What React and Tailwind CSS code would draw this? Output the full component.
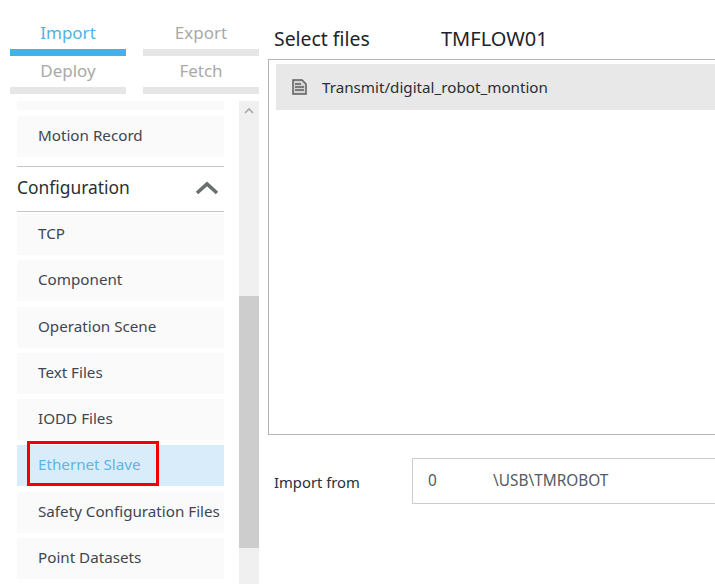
function Tab({ label, active }) {
  return (
    <div className="flex flex-col items-center">
      <div className={`h-[31px] text-[17px] leading-[29px] ${active ? "text-[#4fb3e8]" : "text-[#a9a9a9]"}`}>{label}</div>
      <div className={`h-[7px] w-full ${active ? "bg-[#47b0e5]" : "bg-[#e6e6e6]"}`} />
    </div>
  );
}

function Item({ label, active, children }) {
  return (
    <div className={`relative h-[41px] shrink-0 pl-[21px] text-[15.2px] leading-[39px] ${active ? "bg-[#d8edf9] text-[#5bb5e8]" : "bg-[#fafafa] text-[#3f4650]"}`}>
      {label}
      {children}
    </div>
  );
}

export default function App() {
  return (
    <div className="flex h-[584px] w-[715px] overflow-hidden bg-white font-['Noto_Sans','Open_Sans',sans-serif]">
      <div className="flex w-[268px] shrink-0 flex-col pl-[10px] pt-[18px]">
        <div className="grid w-[249px] grid-cols-[116px_116px] justify-between">
          <Tab label="Import" active />
          <Tab label="Export" />
          <Tab label="Deploy" />
          <Tab label="Fetch" />
        </div>
        <div className="mt-[7px] flex h-[483px] w-[249px] overflow-hidden">
          <div className="ml-[7px] flex w-[207px] flex-col">
            <div className="h-[9px] shrink-0 bg-[#fafafa]" />
            <div className="mt-[6px]"><Item label="Motion Record" /></div>
            <div className="mt-[9px] flex h-[46px] shrink-0 items-center justify-between border-y border-[#c4c4c4] text-[17.4px] text-[#2a2f36]">
              <span className="pb-[3px]">Configuration</span>
              <svg width="24" height="14" viewBox="0 0 24 14" className="mb-[3px] mr-[5px]">
                <path d="M2 12 L12 3 L22 12" fill="none" stroke="#68706f" strokeWidth="3.6" />
              </svg>
            </div>
            <div className="mt-[2px] flex flex-col gap-[5.3px]">
              <Item label="TCP" />
              <Item label="Component" />
              <Item label="Operation Scene" />
              <Item label="Text Files" />
              <Item label="IODD Files" />
              <Item label="Ethernet Slave" active>
                <div className="absolute left-[10px] top-[-4px] h-[45px] w-[132px] border-[3px] border-[#f00000]" />
              </Item>
              <Item label="Safety Configuration Files" />
              <Item label="Point Datasets" />
            </div>
          </div>
          <div className="ml-[15px] flex h-full w-[20px] flex-col bg-[#f0f0f0]">
            <div className="flex h-[195px] shrink-0 justify-center pt-[6px]">
              <svg width="10" height="7" viewBox="0 0 10 7">
                <path d="M1 6 L5 2 L9 6" fill="none" stroke="#a8a8a8" strokeWidth="1.6" />
              </svg>
            </div>
            <div className="h-[252px] shrink-0 bg-[#cdcdcd]" />
          </div>
        </div>
      </div>
      <div className="flex min-w-0 flex-1 flex-col">
        <div className="flex h-[59px] items-end pb-[7px] leading-[26px] text-[#20242a]">
          <span className="ml-[6px] w-[167px] text-[19.4px]">Select files</span>
          <span className="text-[20px]">TMFLOW01</span>
        </div>
        <div className="h-[376px] w-[460px] border border-[#b4b4b4] pl-[7px] pt-[4px]">
          <div className="flex h-[46px] items-center bg-[#e8e8e8] pl-[16px] text-[15.2px] text-[#2a2f36]">
            <svg width="15" height="16" viewBox="0 0 15 16" className="mb-[1px] mr-[15px]">
              <path d="M1 1 H10 L14 5 V15 H1 Z" fill="#d4d4d4" stroke="#5e5e5e" strokeWidth="1.5" />
              <path d="M3 5 H9 M3 8 H12 M3 11 H12" stroke="#5e5e5e" strokeWidth="1.4" />
            </svg>
            <span>Transmit/digital_robot_montion</span>
          </div>
        </div>
        <div className="mt-[23px] flex h-[46px]">
          <div className="ml-[6px] flex w-[138px] shrink-0 items-center pt-[3px] text-[14.8px] text-[#2a2f36]">Import from</div>
          <div className="flex h-[46px] w-[320px] shrink-0 items-center border border-[#cccccc] pb-[1px] pl-[15px] text-[15.4px] text-[#555b62]">
            <span className="w-[65px]">0</span>
            <span>\USB\TMROBOT</span>
          </div>
        </div>
      </div>
    </div>
  );
}
